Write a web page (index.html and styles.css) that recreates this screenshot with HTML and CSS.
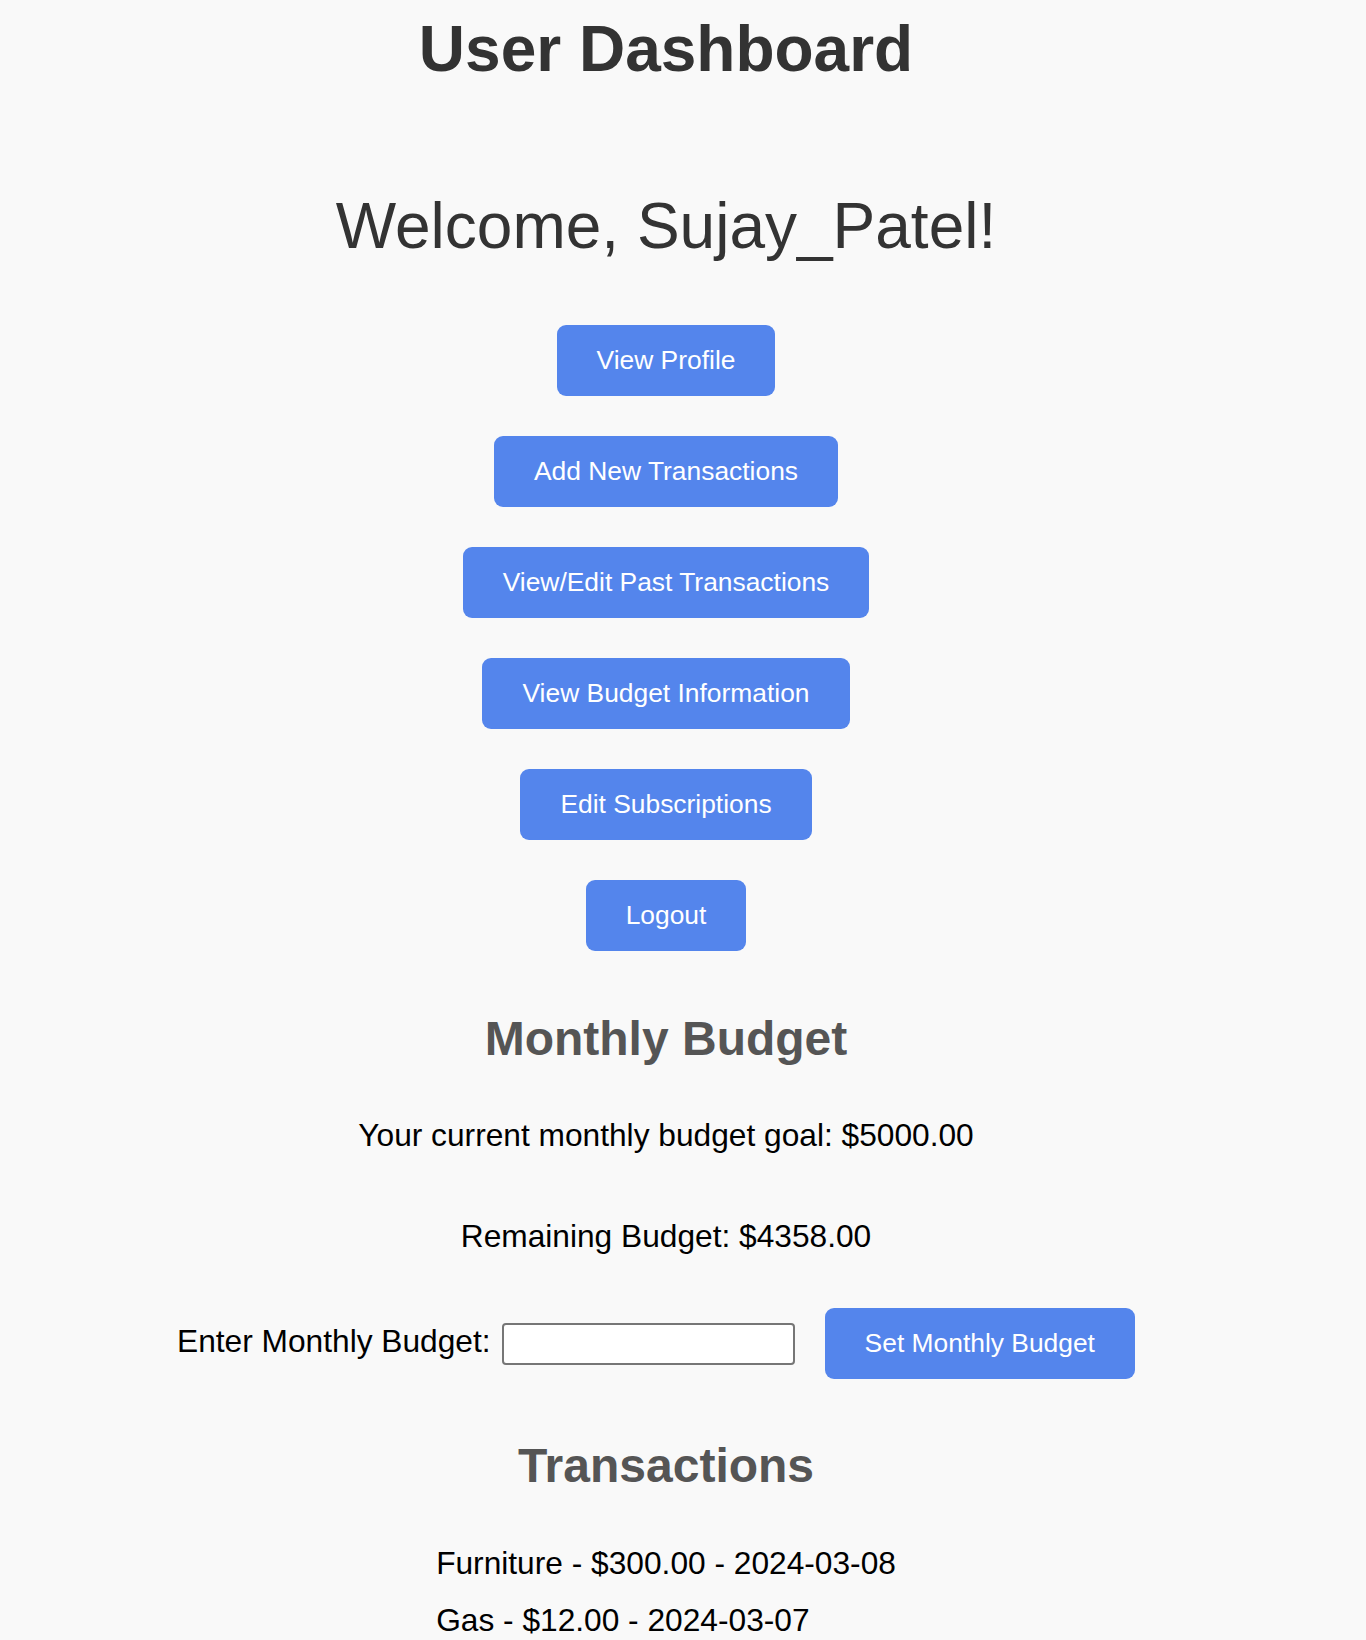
FILE: index.html
```html
<!DOCTYPE html>
<html lang="en">
<head>
<meta charset="utf-8">
<title>User Dashboard</title>
<link rel="stylesheet" href="styles.css">
</head>
<body>
<div class="page">
  <h1 class="title">User Dashboard</h1>
  <h2 class="welcome">Welcome, Sujay_Patel!</h2>
  <div class="actions">
    <button class="btn">View Profile</button>
    <button class="btn">Add New Transactions</button>
    <button class="btn">View/Edit Past Transactions</button>
    <button class="btn">View Budget Information</button>
    <button class="btn">Edit Subscriptions</button>
    <button class="btn">Logout</button>
  </div>
  <h3 class="section-title section-budget">Monthly Budget</h3>
  <p class="info info-goal">Your current monthly budget goal: $5000.00</p>
  <p class="info info-remaining">Remaining Budget: $4358.00</p>
  <form class="budget-form">
    <label class="budget-label" for="budget">Enter Monthly Budget:</label>
    <input class="budget-input" id="budget" type="text">
    <button class="btn btn-set" type="button">Set Monthly Budget</button>
  </form>
  <h3 class="section-title section-transactions">Transactions</h3>
  <div class="list-wrap">
    <ul class="tx-list">
      <li class="tx">Furniture - $300.00 - 2024-03-08</li>
      <li class="tx">Gas - $12.00 - 2024-03-07</li>
    </ul>
  </div>
</div>
</body>
</html>
```

FILE: styles.css
```css
html, body {
  margin: 0;
  padding: 0;
}

body {
  background: #f9f9f9;
  font-family: "Liberation Sans", Arial, Helvetica, sans-serif;
  color: #000;
}

.page {
  width: 1332px;
  padding-top: 13px;
  text-align: center;
}

.title {
  margin: 0;
  font-size: 64px;
  font-weight: bold;
  line-height: 1.15;
  color: #333;
}

.welcome {
  margin: 103px 0 0;
  font-size: 64px;
  font-weight: normal;
  line-height: 1.15;
  color: #333;
}

.actions {
  display: flex;
  flex-direction: column;
  align-items: center;
  gap: 40px;
  margin-top: 62px;
}

.btn {
  font-family: "Liberation Sans", Arial, Helvetica, sans-serif;
  font-size: 26.4px;
  line-height: 31px;
  padding: 20px 40px;
  background: #5485ec;
  color: #fff;
  border: none;
  border-radius: 9px;
  cursor: pointer;
}

.section-title {
  margin: 0;
  font-size: 48px;
  font-weight: bold;
  line-height: 1.15;
  color: #555;
}

.section-budget {
  margin-top: 60px;
}

.info {
  margin: 0;
  font-size: 31.7px;
  line-height: 1.15;
}

.info-goal {
  margin-top: 51px;
}

.info-remaining {
  margin-top: 64px;
}

.budget-form {
  display: flex;
  justify-content: center;
  align-items: baseline;
  margin: 54px 0 0;
}

.budget-label {
  font-size: 31.7px;
  line-height: 1.15;
}

.budget-input {
  align-self: center;
  box-sizing: border-box;
  width: 293px;
  height: 42px;
  margin: 0 0 0 11px;
  border: 2px solid #767676;
  border-radius: 4px;
  background: #fff;
}

.btn-set {
  margin: 0 20px 0 30px;
}

.section-transactions {
  margin-top: 59px;
}

.list-wrap {
  display: flex;
  justify-content: center;
  margin-top: 52px;
}

.tx-list {
  list-style: none;
  margin: 0;
  padding: 0;
  text-align: left;
  display: flex;
  flex-direction: column;
  gap: 20px;
}

.tx {
  font-size: 31.7px;
  line-height: 1.15;
}
```
